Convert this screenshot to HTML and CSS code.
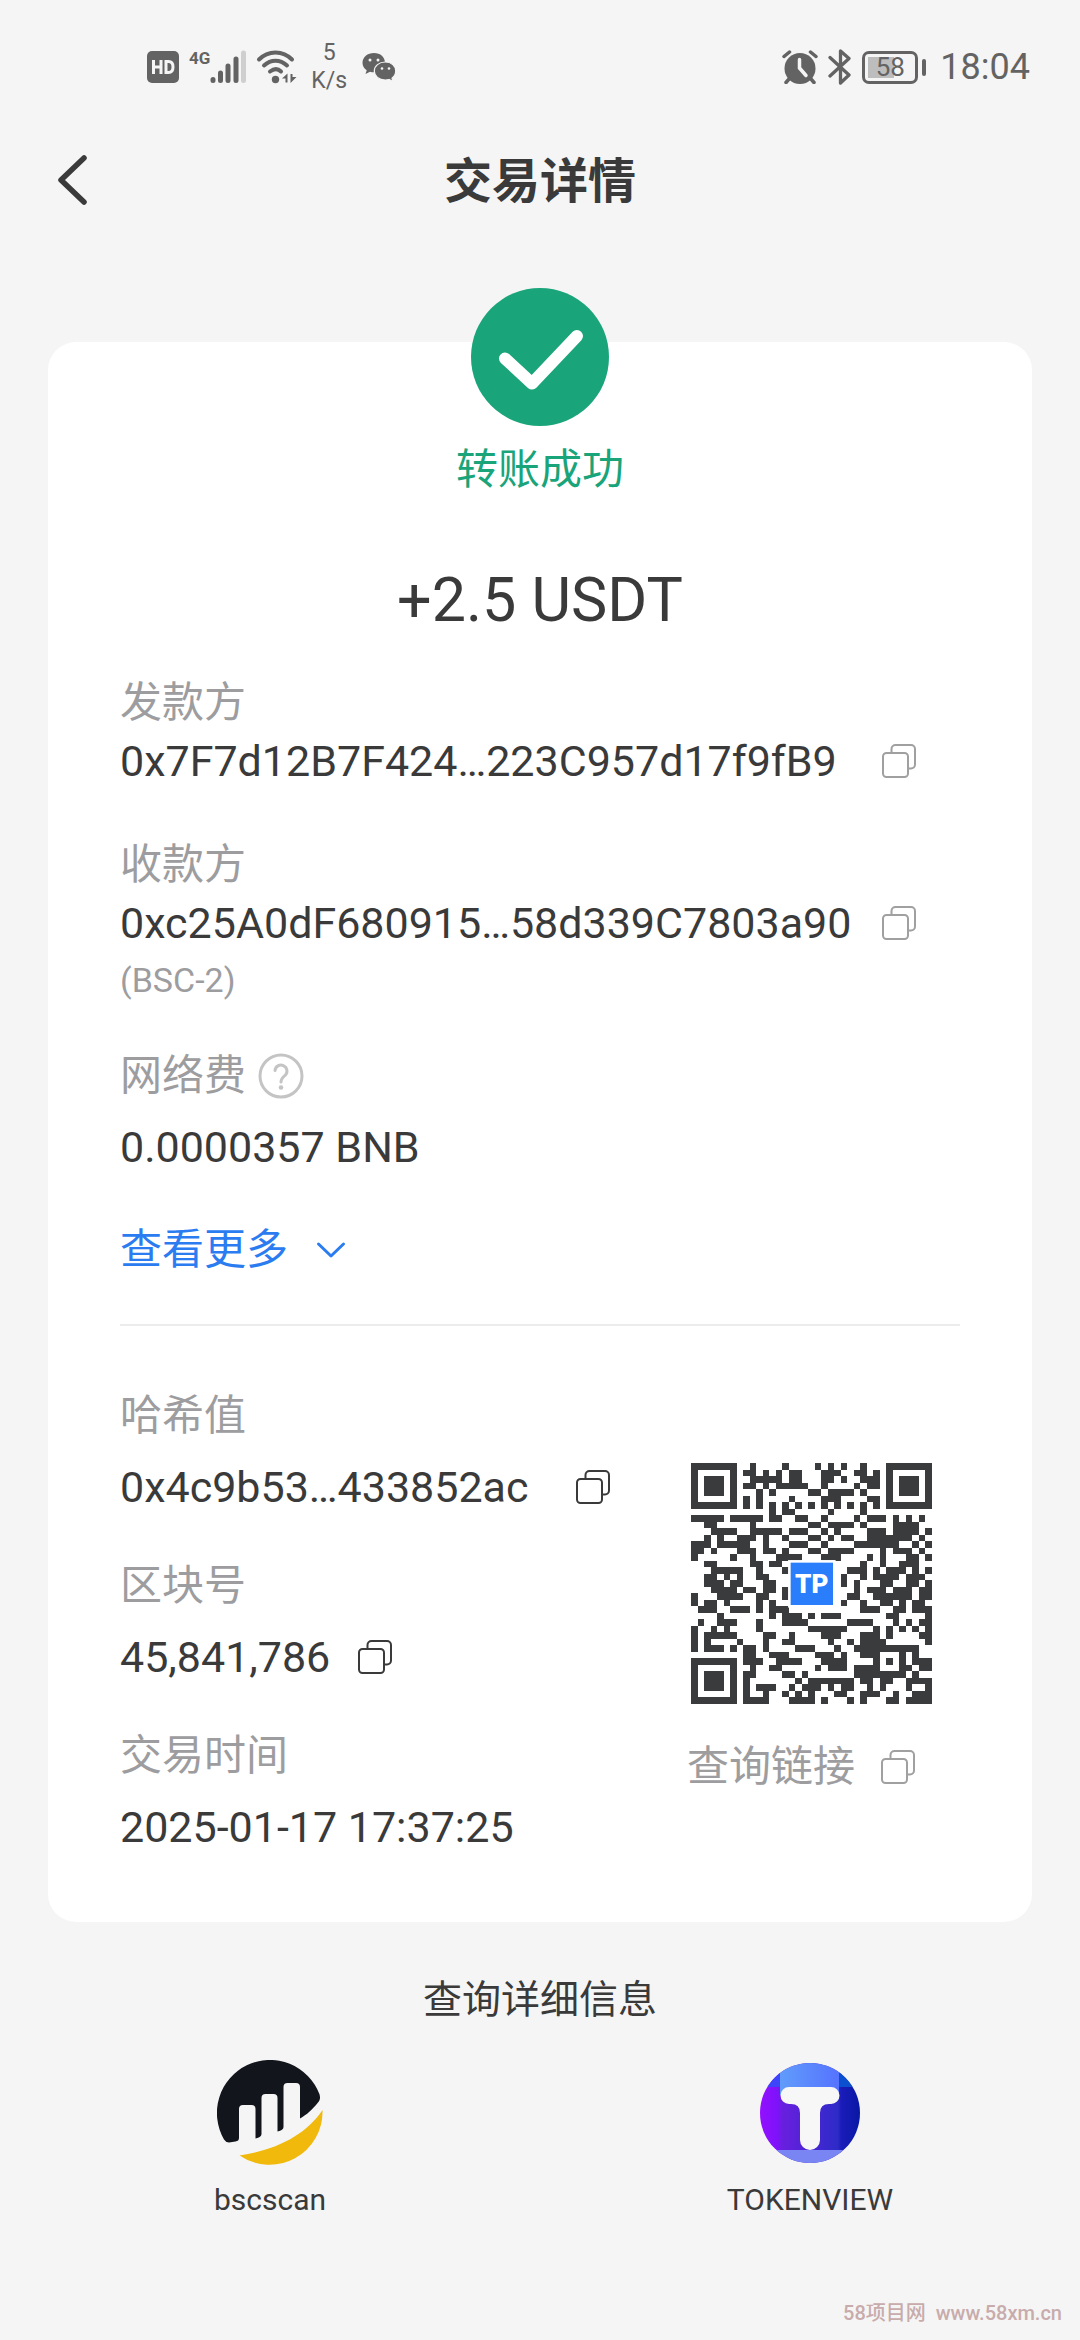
FILE: index.html
```html
<!DOCTYPE html>
<html lang="zh-CN">
<head>
<meta charset="utf-8">
<meta name="viewport" content="width=device-width, initial-scale=1">
<title>交易详情</title>
<link rel="stylesheet" href="styles.css">
</head>
<body>
<svg class="defs" aria-hidden="true">
  <symbol id="copy" viewBox="0 0 34 34">
    <path d="M9.500 8V5a4 4 0 0 1 4-4H29a4 4 0 0 1 4 4V20.500a4 4 0 0 1-4 4H26" />
    <rect x="1" y="9" width="25" height="24" rx="3.500" />
  </symbol>
</svg>

<div class="statusbar">
  <div class="statusbar-group">
    <svg class="ico-hd" viewBox="0 0 32 32"><rect width="32" height="32" rx="5" fill="#636363"/><path d="M6.500 9v14M14 9v14M6.500 16H14M19 10.500v11h2.500c3 0 4.500-2 4.500-5.500s-1.500-5.500-4.500-5.500z" fill="none" stroke="#f5f5f5" stroke-width="3"/></svg>
    <div class="signal">
      <span class="signal-type">4G</span>
      <svg class="ico-signal" viewBox="0 0 36 34"><g stroke="#636363" stroke-width="5" stroke-linecap="round"><path d="M3 29.500v1M10.500 23v7.500M18 16v14.500M26 9v21.500"/><path d="M33.500 3v27.500" stroke="#cfcfcf"/></g></svg>
    </div>
    <svg class="ico-wifi" viewBox="0 0 42 34"><g fill="none" stroke="#636363" stroke-width="4" stroke-linecap="round"><path d="M3 9.500C12 0 27 0 36 9.500"/><path d="M8 15.500C15 9 24 9 31 15.500"/><path d="M14 21.500c4-3 8-3 11 0"/></g><circle cx="19.500" cy="29.500" r="3.700" fill="#636363"/><path d="M26 28.500l5.500-5v9h-2v-4zM40.500 27l-6 6v-9h2V27z" fill="#636363"/></svg>
    <div class="speed"><span>5</span><span>K/s</span></div>
    <svg class="ico-wechat" viewBox="0 0 34 30"><path fill="#636363" d="M12 1C5.500 1 .500 5.200.500 10.800c0 3 1.500 5.700 4.200 7.500L3.500 22l4.500-2.300c1.300.4 2.500.6 4 .6C18.500 20.300 23 16 23 10.800 23 5.200 18.500 1 12 1z"/><path fill="#636363" stroke="#f5f5f5" stroke-width="1.200" d="M23.300 10C17 10 12.300 14 12.300 19s4.700 9 11 9c1.300 0 2.600-.2 3.700-.5l4 2-1-3.300c2.300-1.700 3.700-4.300 3.700-7.200 0-5-4.200-9-10.400-9z"/><g fill="#f5f5f5"><circle cx="8" cy="8" r="1.500"/><circle cx="16" cy="8" r="1.500"/><circle cx="20" cy="16.500" r="1.300"/><circle cx="27" cy="16.500" r="1.300"/></g></svg>
  </div>
  <div class="statusbar-group statusbar-right">
    <svg class="ico-alarm" viewBox="0 0 36 34"><circle cx="18" cy="18.500" r="15.500" fill="#636363"/><path d="M2 6.500L7.500 2M34 6.500L28.500 2M7 29l-3 3.500M29 29l3 3.500" stroke="#636363" stroke-width="3.500" stroke-linecap="round"/><path d="M17.500 9.500V18l6.500 7.500" fill="none" stroke="#f5f5f5" stroke-width="3.500" stroke-linecap="round"/></svg>
    <svg class="ico-bt" viewBox="0 0 24 36"><path d="M2 8.500L21 26l-8.500 8V2L21 9.500 2 27" fill="none" stroke="#636363" stroke-width="3.300" stroke-linejoin="round" stroke-linecap="round"/></svg>
    <div class="battery"><span class="battery-level">58</span></div>
    <span class="clock">18:04</span>
  </div>
</div>

<header class="header">
  <button class="back" type="button" aria-label="返回"><svg viewBox="0 0 30 50"><path d="M27 3L4 25l23 22" fill="none" stroke="#3a3a3a" stroke-width="5.500" stroke-linecap="round" stroke-linejoin="round"/></svg></button>
  <h1 class="title">交易详情</h1>
</header>

<main class="main">
  <section class="card">
    <svg class="badge" viewBox="0 0 138 138"><circle cx="69" cy="69" r="69" fill="#19a47a"/><path d="M34 70.500L61 95.500 106 48" fill="none" stroke="#fff" stroke-width="12" stroke-linecap="round" stroke-linejoin="round"/></svg>
    <p class="result">转账成功</p>
    <p class="amount">+2.5 USDT</p>

    <div class="party">
      <div class="label">发款方</div>
      <div class="party-row"><span class="value">0x7F7d12B7F424…223C957d17f9fB9</span><button class="copy muted" type="button" aria-label="复制发款方"><svg><use href="#copy"/></svg></button></div>
    </div>
    <div class="party">
      <div class="label">收款方</div>
      <div class="party-row"><span class="value">0xc25A0dF680915…58d339C7803a90</span><button class="copy muted" type="button" aria-label="复制收款方"><svg><use href="#copy"/></svg></button></div>
      <div class="note">(BSC-2)</div>
    </div>
    <div class="field fee">
      <div class="label">网络费<button class="help" type="button" aria-label="说明"><svg viewBox="0 0 46 46"><g fill="none" stroke="#c4c4c4" stroke-width="3"><circle cx="23" cy="23" r="21"/><path d="M17 17.500a6 6 0 1 1 10.500 4.500c-2.500 2-4.500 3.500-4.500 7" stroke-linecap="round"/></g><circle cx="23" cy="34.500" r="2.300" fill="#c4c4c4"/></svg></button></div>
      <div class="value">0.0000357 BNB</div>
    </div>
    <button class="more" type="button">查看更多<svg viewBox="0 0 30 18"><path d="M2.500 3L15 15 27.500 3" fill="none" stroke="#2b7cf0" stroke-width="3" stroke-linecap="round" stroke-linejoin="round"/></svg></button>

    <div class="chain">
      <div class="chain-info">
        <div class="field">
          <div class="label">哈希值</div>
          <div class="value value-row hash">0x4c9b53…433852ac<button class="copy" type="button" aria-label="复制哈希值"><svg><use href="#copy"/></svg></button></div>
        </div>
        <div class="field">
          <div class="label">区块号</div>
          <div class="value value-row">45,841,786<button class="copy" type="button" aria-label="复制区块号"><svg><use href="#copy"/></svg></button></div>
        </div>
        <div class="field">
          <div class="label">交易时间</div>
          <div class="value">2025-01-17 17:37:25</div>
        </div>
      </div>
      <div class="lookup">
        <svg class="qr" viewBox="0 0 37 37" role="img" aria-label="QR">
          <g transform="translate(0 .5)" stroke="#3a3b3c" stroke-width="1" shape-rendering="crispEdges">
            <path d="M0 0h7M9 0h1M14 0h1M19 0h1M21 0h1M23 0h1M26 0h1M30 0h7
M0 1h1M6 1h1M8 1h2M11 1h1M13 1h1M15 1h2M20 1h3M25 1h2M28 1h1M30 1h1M36 1h1
M0 2h1M2 2h3M6 2h1M9 2h5M15 2h2M20 2h2M23 2h1M26 2h3M30 2h1M32 2h3M36 2h1
M0 3h1M2 3h3M6 3h1M8 3h2M11 3h1M13 3h5M20 3h1M25 3h1M27 3h2M30 3h1M32 3h3M36 3h1
M0 4h1M2 4h3M6 4h1M10 4h1M12 4h1M18 4h2M21 4h4M26 4h1M30 4h1M32 4h3M36 4h1
M0 5h1M6 5h1M8 5h1M10 5h1M15 5h1M20 5h3M27 5h2M30 5h1M36 5h1
M0 6h7M8 6h1M10 6h1M12 6h1M14 6h1M16 6h1M18 6h1M20 6h1M22 6h1M24 6h1M26 6h1M28 6h1M30 6h7
M12 7h1M14 7h2M21 7h1M26 7h1
M0 8h5M6 8h5M12 8h2M16 8h2M20 8h1M25 8h1M27 8h3M31 8h1M33 8h1M35 8h1
M2 9h2M9 9h1M18 9h2M21 9h4M26 9h1M31 9h4
M3 10h4M9 10h5M15 10h3M20 10h1M22 10h1M27 10h3M31 10h4M36 10h1
M2 11h1M4 11h1M7 11h3M11 11h1M14 11h1M18 11h2M21 11h1M23 11h2M27 11h7M35 11h1
M0 12h3M4 12h5M11 12h1M15 12h3M20 12h1M25 12h7M34 12h1M36 12h1
M0 13h2M3 13h1M7 13h3M11 13h2M14 13h1M18 13h2M21 13h4M29 13h1M31 13h3M35 13h1
M0 14h1M6 14h1M9 14h1M13 14h4M20 14h3M27 14h1M29 14h1M33 14h2M36 14h1
M2 15h2M9 15h2M12 15h2M26 15h1M29 15h1M32 15h3
M3 16h4M7 16h1M10 16h1M14 16h1M24 16h3M28 16h1M30 16h3M34 16h1M36 16h1
M2 17h2M5 17h1M7 17h1M10 17h2M23 17h1M26 17h1M28 17h4M33 17h3
M2 18h3M6 18h2M11 18h2M23 18h1M25 18h1M29 18h2M33 18h2M36 18h1
M3 19h4M8 19h2M11 19h2M14 19h1M25 19h1M27 19h3M31 19h3M35 19h2
M0 20h1M4 20h4M10 20h2M14 20h1M24 20h2M28 20h6M35 20h2
M0 21h1M2 21h2M5 21h1M10 21h1M12 21h1M23 21h1M26 21h1M29 21h2M32 21h1M34 21h2
M1 22h3M6 22h3M10 22h1M12 22h3M26 22h3M31 22h2M34 22h3
M4 23h1M12 23h1M14 23h3M18 23h1M20 23h3M30 23h2M36 23h1
M1 24h1M4 24h3M10 24h1M14 24h4M24 24h4M31 24h1M33 24h1M35 24h2
M0 25h1M3 25h1M5 25h1M10 25h1M18 25h6M28 25h1M30 25h1M32 25h1M34 25h1M36 25h1
M0 26h1M2 26h5M11 26h2M15 26h1M20 26h3M26 26h3M30 26h1M35 26h2
M0 27h1M2 27h1M7 27h1M11 27h1M14 27h2M21 27h1M24 27h1M26 27h4M36 27h1
M0 28h1M2 28h3M6 28h1M8 28h2M11 28h1M16 28h3M22 28h1M25 28h10
M8 29h2M12 29h3M19 29h3M23 29h1M26 29h3M32 29h1M34 29h1
M0 30h7M8 30h3M13 30h4M20 30h4M28 30h1M30 30h1M32 30h1M34 30h3
M0 31h1M6 31h1M9 31h1M12 31h2M19 31h1M21 31h3M25 31h4M32 31h2M35 31h2
M0 32h1M2 32h3M6 32h1M8 32h2M14 32h2M17 32h1M25 32h8M34 32h1
M0 33h1M2 33h3M6 33h1M8 33h1M16 33h1M18 33h7M26 33h2M29 33h2M33 33h4
M0 34h1M2 34h3M6 34h1M8 34h1M10 34h3M15 34h1M17 34h3M21 34h1M23 34h2M27 34h1M29 34h1M33 34h1M36 34h1
M0 35h1M6 35h1M8 35h1M11 35h1M14 35h1M16 35h1M18 35h1M22 35h2M26 35h3M31 35h1M34 35h3
M0 36h7M8 36h4M15 36h4M20 36h1M24 36h1M26 36h1M30 36h2M33 36h4"/>
          </g>
          <rect x="14.900" y="14.900" width="7.300" height="7.300" fill="#fff"/>
          <rect x="15.300" y="15.300" width="6.500" height="6.500" fill="#2a7dfb"/>
          <text class="qr-logo" x="18.550" y="20" text-anchor="middle">TP</text>
        </svg>
        <div class="label lookup-link">查询链接<button class="copy muted" type="button" aria-label="复制链接"><svg><use href="#copy"/></svg></button></div>
      </div>
    </div>
  </section>

  <section class="explorers">
    <h2 class="explorers-title">查询详细信息</h2>
    <nav class="explorers-list">
      <a class="explorer" href="#">
        <svg viewBox="0 0 106 106"><path fill="#12161c" d="M7 79.400A53 53 0 1 1 102.500 34.200c1 3.500.5 6-1.500 8.300C95 50 90 54.500 83 58.500V27q0-4-4-4H70.500q-4 0-4 4V67q0 3-6 4.500V38q0-4-4-4H48.500q-4 0-4 4V74q0 3-6 4.500V49q0-4-4-4H26q-4 0-4 4V78q0 3-3.500 3.500L12 82.500Q9 82.500 7 79.400z"/><path fill="#f0b90b" d="M22.500 95.500C59 90 89 75 105.500 50A53 53 0 0 1 22.500 95.500z"/></svg>
        <span>bscscan</span>
      </a>
      <a class="explorer" href="#">
        <svg class="tokenview" viewBox="-3 -3 106 106">
          <defs>
            <clipPath id="disc"><circle cx="50" cy="50" r="50"/></clipPath>
            <linearGradient id="body"><stop offset="0" stop-color="#9410ff"/><stop offset=".18" stop-color="#7d12fa"/><stop offset=".21" stop-color="#6a1fe0"/><stop offset=".78" stop-color="#2d2bc8"/><stop offset=".81" stop-color="#1b1cba"/><stop offset="1" stop-color="#0818a4"/></linearGradient>
            <linearGradient id="cap"><stop offset="0" stop-color="#609cfb"/><stop offset="1" stop-color="#5673ff"/></linearGradient>
          </defs>
          <g clip-path="url(#disc)"><path fill="url(#body)" d="M0 0h100v100H0z"/><path fill="#3d45fb" d="M0 0h20v24H0z"/><path fill="#0d50cf" d="M79 0h21v24H79z"/><path fill="url(#cap)" d="M20 0h59v32H20z"/><path fill="#7985f3" d="M0 87h100v13H0z"/></g>
          <path fill="#f7f7f7" d="M29 24H71a8.500 8.500 0 0 1 0 17H69Q60 41 60 50V77a10 10 0 0 1-20 0V50Q40 41 31 41H29a8.500 8.500 0 0 1 0-17z"/>
        </svg>
        <span>TOKENVIEW</span>
      </a>
    </nav>
  </section>
</main>
<footer class="watermark">58项目网&nbsp; www.58xm.cn</footer>
</body>
</html>
```
FILE: styles.css
```css
* { box-sizing: border-box; }

body {
  margin: 0;
  min-height: 100vh;
  display: flex;
  flex-direction: column;
  background: #f5f5f5;
  color: #3a3a3a;
  font-family: Roboto, "Noto Sans CJK SC", sans-serif;
}

h1, h2, p { margin: 0; font-weight: 400; }
svg { display: block; flex: none; }
.defs { position: absolute; width: 0; height: 0; }

button {
  margin: 0;
  padding: 0;
  border: 0;
  background: none;
  color: inherit;
  font: inherit;
}

/* System status bar */
.statusbar {
  display: flex;
  justify-content: space-between;
  align-items: center;
  height: 134px;
  padding: 0 50px 0 147px;
  color: #636363;
}
.statusbar-group { display: flex; align-items: center; gap: 10px; }
.ico-hd { width: 32px; height: 32px; }
.signal { display: flex; align-items: flex-start; }
.signal-type { font-size: 17px; line-height: 16px; font-weight: 700; }
.ico-signal { width: 36px; height: 34px; }
.ico-wifi { width: 42px; height: 34px; }
.speed {
  display: flex;
  flex-direction: column;
  align-items: center;
  margin: 0 5px 0 3px;
  font-size: 23px;
  line-height: 28px;
}
.ico-wechat { width: 34px; height: 30px; }
.ico-alarm { width: 36px; height: 34px; }
.ico-bt { width: 24px; height: 36px; }
.battery {
  position: relative;
  width: 56px;
  height: 33px;
  margin-right: 12px;
  padding: 3px;
  border: 3px solid #636363;
  border-radius: 7px;
}
.battery::after {
  content: "";
  position: absolute;
  top: 5px;
  right: -11px;
  width: 4px;
  height: 17px;
  border-radius: 2px;
  background: #636363;
}
.battery-level {
  display: block;
  background: linear-gradient(90deg, #bdbdbd 58%, transparent 58%);
  font-size: 26px;
  line-height: 21px;
  text-align: center;
}
.clock { font-size: 36px; line-height: 40px; }

/* Page header */
.header {
  display: grid;
  grid-template-columns: 1fr auto 1fr;
  align-items: center;
  height: 92px;
  padding: 0 57px;
}
.back svg { width: 30px; height: 50px; }
.title { padding-top: 4px; font-size: 48px; line-height: 64px; font-weight: 700; }

/* Transaction card */
.main { padding: 116px 48px 0; }
.card {
  display: flex;
  flex-direction: column;
  padding: 0 72px 66px;
  border-radius: 28px;
  background: #fff;
}
.badge { width: 138px; height: 138px; margin: -54px auto 15px; }
.result { color: #19a47a; font-size: 42px; line-height: 58px; text-align: center; }
.amount { margin: 61px 0 34px; font-size: 61px; line-height: 80px; text-align: center; }

.label { display: flex; align-items: center; color: #9d9d9f; font-size: 42px; line-height: 58px; }
.value { font-size: 43px; line-height: 58px; }
.note { color: #9d9d9f; font-size: 34px; line-height: 56px; }
.party + .party { margin-top: 46px; }
.party-row { display: flex; align-items: center; justify-content: space-between; padding-right: 44px; }
.value-row { display: flex; align-items: center; gap: 28px; }
.hash { gap: 48px; }
.field { display: grid; gap: 13px; }
.fee { margin-top: 39px; }

.copy { color: #3a3a3a; }
.copy.muted { color: #a0a0a0; }
.copy svg { width: 34px; height: 34px; fill: none; stroke: currentColor; stroke-width: 2; }
.help { margin-left: 12px; }
.help svg { width: 46px; height: 46px; }
.more {
  display: flex;
  align-items: center;
  gap: 28px;
  margin: 45px 0;
  color: #2b7cf0;
  font-size: 42px;
  line-height: 58px;
}
.more svg { width: 30px; height: 18px; }

.chain {
  display: flex;
  justify-content: space-between;
  padding: 61px 28px 0 0;
  border-top: 2px solid #ececec;
}
.chain-info { display: grid; gap: 41px; }
.lookup { padding-top: 76px; }
.qr { width: 241px; height: 241px; margin-left: 4px; }
.qr-logo { fill: #fff; font-size: 4px; font-weight: 900; }
.lookup-link { gap: 26px; margin-top: 34px; }

/* Block explorers */
.explorers { padding-top: 49px; text-align: center; }
.explorers-title { font-size: 39px; line-height: 58px; }
.explorers-list { display: grid; grid-template-columns: 1fr 1fr; margin: 31px -48px 0; }
.explorer {
  display: flex;
  flex-direction: column;
  align-items: center;
  gap: 14px;
  color: inherit;
  font-size: 30px;
  line-height: 40px;
  text-decoration: none;
}
.explorer svg { width: 106px; height: 106px; }

.watermark {
  margin-top: auto;
  padding: 0 18px 14px;
  color: #c8abab;
  font-size: 20px;
  font-weight: 500;
  line-height: 26px;
  text-align: right;
}
```
